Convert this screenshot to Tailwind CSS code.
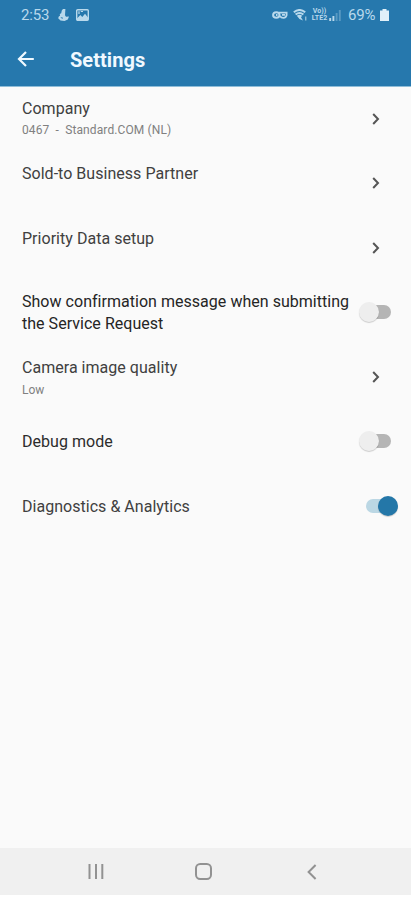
<!DOCTYPE html>
<html lang="en">
<head>
<meta charset="utf-8">
<meta name="viewport" content="width=device-width, initial-scale=1">
<title>Settings</title>
<script src="https://cdn.jsdelivr.net/npm/@tailwindcss/browser@4"></script>
</head>
<body class="bg-white overflow-hidden font-['Roboto',sans-serif]">
<svg class="hidden">
  <symbol id="chev" viewBox="0 0 8 12"><path d="M1.2 1 6 6 1.2 11" fill="none" stroke="#555555" stroke-width="2"/></symbol>
</svg>
<div class="w-[411px] h-[895px] flex flex-col bg-[#fafafa]">
  <header class="h-[86px] shrink-0 bg-[#2678ad]">
    <div class="h-[30px] flex items-center pl-[21px] pr-[22px] text-[#b9d9ec]">
      <span class="w-[28px] text-[15px] leading-[20px] tracking-[-0.2px] whitespace-nowrap">2:53</span>
      <svg class="ml-[9px] w-[11px] h-[12px]" viewBox="0 0 11 12" fill="currentColor"><path d="M5 0H7.4L7 6.3 8 7.8 11 7.4 9.8 10.6 6.5 12 2.5 11.6.2 9.2.8 7.4 2 6.8 1.8 5 3.2 4.2 3.8 1.5Z"/><path d="M2.8 8.6 5 9.2" stroke="#2678ad" stroke-width=".9"/></svg>
      <svg class="ml-[7px] w-[13px] h-[12px]" viewBox="0 0 13 12"><rect x=".7" y=".7" width="11.6" height="10.6" rx="1" fill="none" stroke="currentColor" stroke-width="1.4"/><path d="M1 9.5 4.3 6 6.3 8 9 4.8 12 8.5V11H1Z" fill="currentColor"/><path d="M3 2.2V5M4.8 2.5H7" stroke="currentColor" stroke-width="1.2"/></svg>
      <div class="grow"></div>
      <svg class="w-[16px] h-[10px]" viewBox="0 0 16 10" fill="none" stroke="currentColor" stroke-width="2"><ellipse cx="4.3" cy="5" rx="3.2" ry="2.8"/><path d="M7 2.6H14.6V5.2Q13.8 7.8 11.5 7.8 9 7.8 8 5.8M10 4.9H13M4 5H5.5" stroke-width="1.8"/></svg>
      <svg class="ml-[5px] w-[14px] h-[12px]" viewBox="0 0 14 12"><path d="M.8 3.2Q6.5-1.2 12.2 3.2M2.6 5.5Q6.5 2.4 10.4 5.5" fill="none" stroke="currentColor" stroke-width="2"/><path d="M3.8 6.8Q6.5 4.8 9.2 6.8L8 8.3 10 11.5 6.5 10Z" fill="currentColor"/><path d="M12.8 7.5V11.5" stroke="currentColor"/></svg>
      <span class="ml-[4px] w-[17px] h-[14px] flex flex-col items-center text-[7px] leading-[7px] font-bold whitespace-nowrap"><span>Vo))</span><span>LTE2</span></span>
      <svg class="ml-[1px] w-[12px] h-[12px]" viewBox="0 0 12 12" stroke="currentColor" stroke-width="1.9"><path d="M1.2 9V12M4.4 7V12"/><path d="M7.6 4V12M10.8 1V12" opacity=".35"/></svg>
      <span class="ml-[7px] w-[28px] text-[15px] leading-[20px] tracking-[-0.2px] whitespace-nowrap">69%</span>
      <svg class="ml-[4px] w-[9px] h-[12px]" viewBox="0 0 9 12" fill="#e0f0f9"><path d="M2.5 0H6.5V1.5H9V12H0V1.5H2.5Z"/></svg>
    </div>
    <div class="h-[58px] flex items-center pl-[17px] text-[#f0f9ff]">
      <svg class="w-[17px] h-[16px]" viewBox="0 0 17 16" fill="none" stroke="currentColor" stroke-width="2.2"><path d="M16.8 8H2.3M9 1 2 8 9 15"/></svg>
      <h1 class="ml-[36px] pt-px text-[20px] leading-[26px] font-bold tracking-[0.05px] whitespace-nowrap">Settings</h1>
    </div>
  </header>
  <div class="h-[0.5px] shrink-0 bg-[#8fbdd8]"></div>
  <main class="grow pl-[22px] text-[16px] leading-[22px] tracking-[0.03px] text-[#404040] flex flex-col">
    <section class="h-[64.5px] flex items-center pr-[31.5px]">
      <div class="grow self-start pt-[11px]"><div>Company</div><div class="text-[12px] leading-[20px] tracking-[0.11px] text-[#808080] whitespace-pre">0467  -  Standard.COM (NL)</div></div>
      <svg class="w-[8px] h-[12px]"><use href="#chev"/></svg>
    </section>
    <section class="h-[64.5px] flex items-center pr-[31.5px]">
      <div class="grow self-start pt-[11.5px]">Sold-to Business Partner</div>
      <svg class="w-[8px] h-[12px]"><use href="#chev"/></svg>
    </section>
    <section class="h-[64.5px] flex items-center pr-[31.5px]">
      <div class="grow self-start pt-[12px]">Priority Data setup</div>
      <svg class="w-[8px] h-[12px]"><use href="#chev"/></svg>
    </section>
    <section class="h-[64.5px] flex items-center pr-[20px] text-[#252525]">
      <div class="grow pt-[2px] whitespace-nowrap"><div>Show confirmation message when submitting</div><div>the Service Request</div></div>
      <div class="w-[32px] h-[20px] shrink-0 flex items-center">
        <div class="size-[20px] shrink-0 rounded-full bg-[#eeeeee] shadow-[0_1px_1px_rgba(0,0,0,0.18)] z-10"></div>
        <div class="w-[22px] h-[14px] -ml-[10px] shrink-0 rounded-full bg-[#b5b5b5]"></div>
      </div>
    </section>
    <section class="h-[64.5px] flex items-center pr-[31.5px]">
      <div class="grow self-start pt-[12px]"><div>Camera image quality</div><div class="pt-px text-[12px] leading-[20px] text-[#808080]">Low</div></div>
      <svg class="w-[8px] h-[12px]"><use href="#chev"/></svg>
    </section>
    <section class="h-[64.5px] flex items-center pr-[20px] text-[#2c2c2c]">
      <div class="grow pt-[2px]">Debug mode</div>
      <div class="w-[32px] h-[20px] shrink-0 flex items-center">
        <div class="size-[20px] shrink-0 rounded-full bg-[#eeeeee] shadow-[0_1px_1px_rgba(0,0,0,0.18)] z-10"></div>
        <div class="w-[22px] h-[14px] -ml-[10px] shrink-0 rounded-full bg-[#b5b5b5]"></div>
      </div>
    </section>
    <section class="h-[64.5px] flex items-center pr-[13px]">
      <div class="grow pt-[2px]">Diagnostics &amp; Analytics</div>
      <div class="w-[32px] h-[20px] shrink-0 flex items-center">
        <div class="w-[22px] h-[14px] shrink-0 rounded-full bg-[#bbd7e4]"></div>
        <div class="size-[20px] -ml-[10px] shrink-0 rounded-full bg-[#2477a8] shadow-[0_1px_1px_rgba(0,0,0,0.18)] z-10"></div>
      </div>
    </section>
  </main>
  <nav class="h-[47px] shrink-0 bg-[#f0f0f0] flex items-center pl-[88px] text-[#929292]">
    <svg class="w-[16px] h-[15px]" viewBox="0 0 16 15" stroke="currentColor" stroke-width="2"><path d="M1.5 0V15M8 0V15M14.3 0V15"/></svg>
    <svg class="ml-[91px] w-[17px] h-[17px]" viewBox="0 0 17 17" fill="none" stroke="currentColor" stroke-width="2"><rect x="1" y="1" width="15" height="15" rx="4.2"/></svg>
    <svg class="ml-[95px] w-[10px] h-[16px]" viewBox="0 0 10 16" fill="none" stroke="currentColor" stroke-width="2"><path d="M8.6 1 1.6 8 8.6 15"/></svg>
  </nav>
</div>
</body>
</html>
